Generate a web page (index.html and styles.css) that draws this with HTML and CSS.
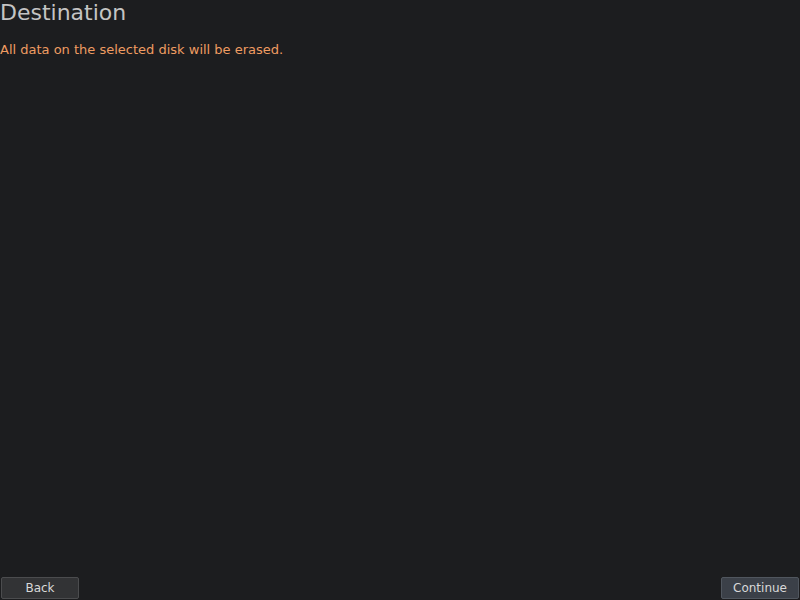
FILE: index.html
```html
<!DOCTYPE html>
<html>
<head>
<meta charset="utf-8">
<link rel="stylesheet" href="styles.css">
</head>
<body>
<div class="page">
  <header class="head">
    <h1 class="title">Destination</h1>
    <p class="warning">All data on the selected disk will be erased.</p>
  </header>
  <div class="content"></div>
  <footer class="actions">
    <button class="btn">Back</button>
    <button class="btn btn-default">Continue</button>
  </footer>
</div>
</body>
</html>
```
FILE: styles.css
```css
html, body {
  margin: 0;
  padding: 0;
  height: 100%;
  background: #1c1d1f;
}
.page {
  height: 600px;
  display: flex;
  flex-direction: column;
  font-family: "DejaVu Sans", sans-serif;
}
.head {
  padding: 0;
}
.title {
  margin: 0;
  font-weight: normal;
  font-size: 22px;
  line-height: 26px;
  color: #c4c4c4;
}
.warning {
  margin: 15px 0 0 0;
  font-size: 13px;
  line-height: 17px;
  color: #ee9c62;
}
.content {
  flex: 1;
}
.actions {
  display: flex;
  justify-content: space-between;
  padding: 0 1px 1px 1px;
}
.btn {
  font-family: "DejaVu Sans", sans-serif;
  font-size: 12px;
  height: 22px;
  width: 78px;
  padding: 0;
  color: #d8d8d8;
  background: #323335;
  border: 1px solid #4b4c4e;
  border-radius: 2px;
}
.btn-default {
  background: #3b4048;
  border-color: #50565e;
}
```
